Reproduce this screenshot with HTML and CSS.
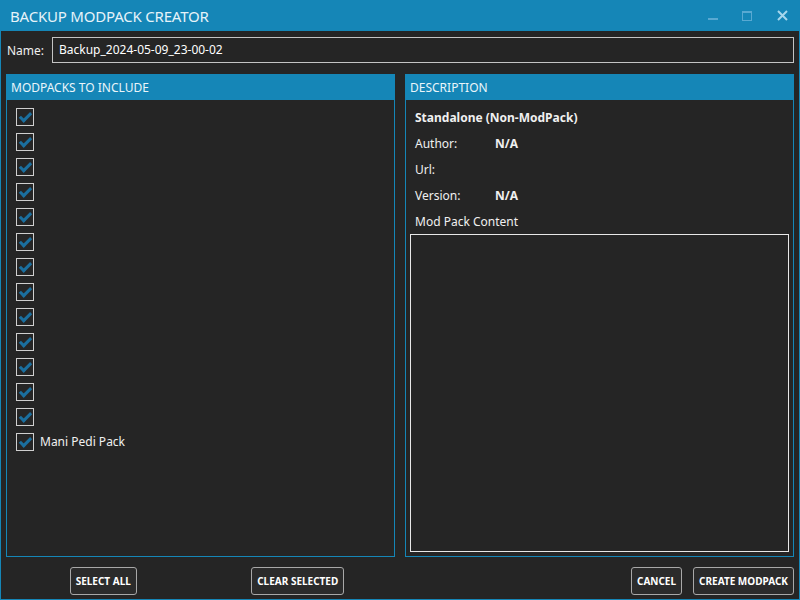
FILE: index.html
```html
<!DOCTYPE html>
<html>
<head>
<meta charset="utf-8">
<link rel="stylesheet" href="styles.css">
</head>
<body>
<div class="window">
  <div class="titlebar">
    <div class="title">BACKUP MODPACK CREATOR</div>
    <div class="controls">
      <span class="ctl min"><svg width="10" height="10" viewBox="0 0 10 10"><rect x="0" y="7" width="10" height="2" fill="#58a9d2"/></svg></span>
      <span class="ctl max"><svg width="10" height="10" viewBox="0 0 10 10"><rect x="0.5" y="0.5" width="9" height="9" fill="none" stroke="#58a9d2"/><rect x="0" y="0" width="10" height="2" fill="#58a9d2"/></svg></span>
      <span class="ctl close"><svg width="11" height="11" viewBox="0 0 11 11"><path d="M1 1 L10 10 M10 1 L1 10" stroke="#a6d6ec" stroke-width="2"/></svg></span>
    </div>
  </div>
  <div class="content">
    <div class="name-row">
      <label class="name-label">Name:</label>
      <div class="textbox">Backup_2024-05-09_23-00-02</div>
    </div>
    <div class="panels">
      <div class="column">
        <div class="panel">
          <div class="panel-header">MODPACKS TO INCLUDE</div>
          <div class="panel-body list">
            <div class="item"><span class="cb"></span></div>
            <div class="item"><span class="cb"></span></div>
            <div class="item"><span class="cb"></span></div>
            <div class="item"><span class="cb"></span></div>
            <div class="item"><span class="cb"></span></div>
            <div class="item"><span class="cb"></span></div>
            <div class="item"><span class="cb"></span></div>
            <div class="item"><span class="cb"></span></div>
            <div class="item"><span class="cb"></span></div>
            <div class="item"><span class="cb"></span></div>
            <div class="item"><span class="cb"></span></div>
            <div class="item"><span class="cb"></span></div>
            <div class="item"><span class="cb"></span></div>
            <div class="item"><span class="cb"></span><span class="item-text">Mani Pedi Pack</span></div>
          </div>
        </div>
        <div class="buttons split">
          <div class="half"><button class="btn">SELECT ALL</button></div>
          <div class="half"><button class="btn">CLEAR SELECTED</button></div>
        </div>
      </div>
      <div class="column">
        <div class="panel">
          <div class="panel-header">DESCRIPTION</div>
          <div class="panel-body desc">
            <div class="desc-title">Standalone (Non-ModPack)</div>
            <div class="desc-row"><span class="key">Author:</span><span class="val">N/A</span></div>
            <div class="desc-row"><span class="key">Url:</span><span class="val"></span></div>
            <div class="desc-row"><span class="key">Version:</span><span class="val">N/A</span></div>
            <div class="desc-row"><span class="key">Mod Pack Content</span></div>
            <div class="content-box"></div>
          </div>
        </div>
        <div class="buttons right">
          <button class="btn">CANCEL</button>
          <button class="btn">CREATE MODPACK</button>
        </div>
      </div>
    </div>
  </div>
</div>
</body>
</html>
```

FILE: styles.css
```css
html, body {
  margin: 0;
  padding: 0;
}
body {
  width: 800px;
  height: 600px;
  background: #252525;
  font-family: "Noto Sans", "Open Sans", sans-serif;
  color: #f0f0f0;
  overflow: hidden;
}
.window {
  box-sizing: border-box;
  width: 800px;
  height: 600px;
  border: 1px solid #1586b7;
  border-top: none;
  display: flex;
  flex-direction: column;
}
.titlebar {
  height: 31px;
  margin: 0 -1px;
  background: #1586b7;
  display: flex;
  align-items: center;
  justify-content: space-between;
  flex: none;
}
.title {
  padding-left: 10px;
  font-size: 15px;
  color: #e6f3f9;
  letter-spacing: -0.2px;
  padding-top: 1px;
}
.controls {
  display: flex;
  align-items: center;
  padding-right: 12px;
}
.ctl {
  display: flex;
  width: 34px;
  justify-content: center;
}
.ctl svg { display: block; }
.ctl.close { width: 24px; justify-content: flex-end; }
.content {
  flex: 1;
  display: flex;
  flex-direction: column;
  padding: 6px 5px 4px 5px;
}
.name-row {
  display: flex;
  align-items: center;
  height: 26px;
}
.name-label {
  width: 45px;
  padding-left: 1px;
  font-size: 12px;
}
.textbox {
  flex: 1;
  box-sizing: border-box;
  height: 26px;
  border: 1px solid #c4c4c4;
  font-size: 12px;
  padding-left: 6px;
  line-height: 23px;
  color: #ffffff;
}
.panels {
  flex: 1;
  display: flex;
  gap: 10px;
  margin-top: 11px;
}
.column {
  flex: 1;
  display: flex;
  flex-direction: column;
}
.panel {
  flex: 1;
  border: 1px solid #1586b7;
  display: flex;
  flex-direction: column;
}
.panel-header {
  background: #1586b7;
  height: 25px;
  line-height: 26px;
  padding-left: 4px;
  font-size: 12px;
  color: #eaf5fa;
}
.panel-body {
  flex: 1;
}
.list {
  padding: 8px 9px;
}
.item {
  display: flex;
  height: 25px;
  align-items: flex-start;
}
.cb {
  width: 16px;
  height: 16px;
  border: 1px solid #cfcfcf;
  position: relative;
  flex: none;
}
.cb::after {
  content: "";
  position: absolute;
  left: 5px;
  top: 1px;
  width: 4px;
  height: 9px;
  border: solid #1b6f9f;
  border-width: 0 3px 3px 0;
  transform: rotate(45deg);
}
.item-text {
  margin-left: 6px;
  font-size: 12px;
  line-height: 18px;
}
.desc {
  padding: 9px 4px 4px 4px;
  display: flex;
  flex-direction: column;
}
.desc-title {
  font-size: 12px;
  font-weight: bold;
  padding-left: 5px;
  height: 18px;
  line-height: 18px;
}
.desc-row {
  display: flex;
  font-size: 12px;
  padding-left: 5px;
  height: 18px;
  line-height: 18px;
  margin-top: 8px;
}
.key {
  width: 80px;
  white-space: nowrap;
}
.val {
  font-weight: bold;
}
.content-box {
  flex: 1;
  margin-top: 3px;
  border: 1px solid #e8e8e8;
}
.buttons {
  display: flex;
  height: 28px;
  margin-top: 10px;
}
.split .half {
  flex: 1;
  display: flex;
  justify-content: center;
}
.right {
  justify-content: flex-end;
  gap: 11px;
}
.btn {
  height: 28px;
  background: #2b2b2b;
  border: 1px solid #a8a8a8;
  border-radius: 3px;
  color: #ffffff;
  font-family: "Noto Sans", "Open Sans", sans-serif;
  font-weight: bold;
  font-size: 10px;
  padding: 0 5px;
  letter-spacing: 0;
}
```
